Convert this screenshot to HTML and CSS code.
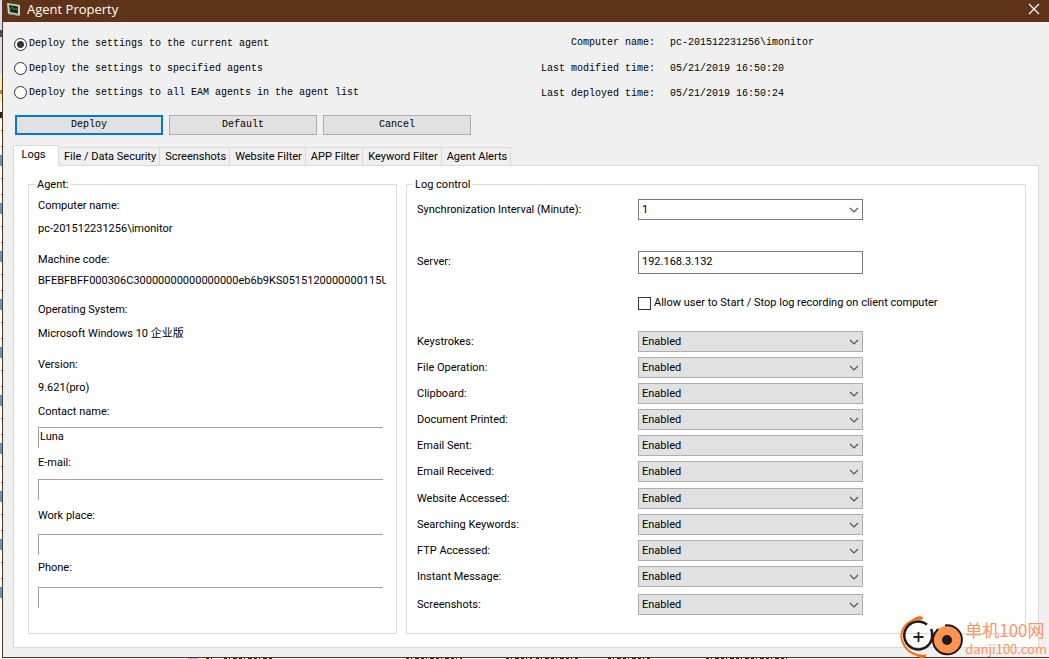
FILE: index.html
```html
<!DOCTYPE html>
<html lang="en">
<head>
<meta charset="utf-8">
<title>Agent Property</title>
<link rel="stylesheet" href="styles.css">
</head>
<body>
<svg class="defs" aria-hidden="true">
  <symbol id="chevron" viewBox="0 0 10 6"><path d="M1 1l4 4 4-4" fill="none" stroke="#555" stroke-width="1.2"/></symbol>
  <pattern id="rows" width="2" height="48" patternUnits="userSpaceOnUse">
    <rect width="2" height="9" y="11" fill="#4d9fe0"/><rect width="2" height="2" y="20" fill="#8f8b88"/>
    <rect x="1" width="1" height="1" y="34" fill="#777"/><rect x="1" width="1" height="1" y="2" fill="#777"/>
  </pattern>
</svg>
<div class="desktop">
  <svg class="edge" aria-hidden="true">
    <rect width="2" height="75" fill="#d3e0f2"/><rect y="30" width="2" height="7" fill="#46457c"/>
    <rect y="76" width="2" height="26" fill="#ffeaa0"/><rect y="90" width="2" height="4" fill="#75a56b"/>
    <rect y="112" width="2" height="6" fill="#222"/><rect y="120" width="2" height="490" fill="url(#rows)"/>
  </svg>
  <main class="window">
    <header class="titlebar">
      <svg class="app-icon" viewBox="0 0 14 14" aria-hidden="true">
        <path d="M0 1l13 2v11L1 12z" fill="#c9cfca"/><path d="M2 3l9 1.500v7L3 10z" fill="#17251b"/>
        <path d="M3 8l2-3 2 3 2-2 2 3" fill="none" stroke="#2d9b3e"/><path d="M1 12l12 2v-1L1 11z" fill="#8a8f8b"/>
      </svg>
      <h1>Agent Property</h1>
      <button class="close" type="button" aria-label="Close"><svg viewBox="0 0 12 12"><path d="M1 1l10 10M11 1L1 11" stroke="#fff" stroke-width="1.300"/></svg></button>
    </header>
    <section class="summary">
      <div class="scope">
        <label><input type="radio" name="scope" checked>Deploy the settings to the current agent</label>
        <label><input type="radio" name="scope">Deploy the settings to specified agents</label>
        <label><input type="radio" name="scope">Deploy the settings to all EAM agents in the agent list</label>
      </div>
      <dl class="info">
        <dt>Computer name:</dt><dd>pc-201512231256\imonitor</dd>
        <dt>Last modified time:</dt><dd>05/21/2019 16:50:20</dd>
        <dt>Last deployed time:</dt><dd>05/21/2019 16:50:24</dd>
      </dl>
    </section>
    <div class="actions">
      <button class="primary" type="button">Deploy</button>
      <button type="button">Default</button>
      <button type="button">Cancel</button>
    </div>
    <nav class="tabs" role="tablist">
      <button type="button" role="tab" aria-selected="true">Logs</button>
      <button type="button" role="tab">File / Data Security</button>
      <button type="button" role="tab">Screenshots</button>
      <button type="button" role="tab">Website Filter</button>
      <button type="button" role="tab">APP Filter</button>
      <button type="button" role="tab">Keyword Filter</button>
      <button type="button" role="tab">Agent Alerts</button>
    </nav>
    <section class="panel" role="tabpanel">
      <fieldset class="agent">
        <legend>Agent:</legend>
        <div class="agent-grid">
          <span>Computer name:</span><span>pc-201512231256\imonitor</span>
          <span>Machine code:</span><span class="code">BFEBFBFF000306C30000000000000000eb6b9KS0515120000000115UB</span>
          <span>Operating System:</span><span>Microsoft Windows 10 企业版</span>
          <span>Version:</span><span>9.621(pro)</span>
          <label for="contact">Contact name:</label><input id="contact" type="text" value="Luna">
          <label for="email">E-mail:</label><input id="email" type="text">
          <label for="work">Work place:</label><input id="work" type="text">
          <label for="phone">Phone:</label><input id="phone" type="text">
        </div>
      </fieldset>
      <fieldset class="log">
        <legend>Log control</legend>
        <div class="log-grid">
          <label for="interval">Synchronization Interval (Minute):</label>
          <div class="pick"><select class="open" id="interval"><option>1</option></select><svg><use href="#chevron"/></svg></div>
          <label for="server">Server:</label><input id="server" type="text" value="192.168.3.132">
          <label class="check"><input type="checkbox">Allow user to Start / Stop log recording on client computer</label>
          <label for="s1">Keystrokes:</label><div class="pick"><select id="s1"><option>Enabled</option></select><svg><use href="#chevron"/></svg></div>
          <label for="s2">File Operation:</label><div class="pick"><select id="s2"><option>Enabled</option></select><svg><use href="#chevron"/></svg></div>
          <label for="s3">Clipboard:</label><div class="pick"><select id="s3"><option>Enabled</option></select><svg><use href="#chevron"/></svg></div>
          <label for="s4">Document Printed:</label><div class="pick"><select id="s4"><option>Enabled</option></select><svg><use href="#chevron"/></svg></div>
          <label for="s5">Email Sent:</label><div class="pick"><select id="s5"><option>Enabled</option></select><svg><use href="#chevron"/></svg></div>
          <label for="s6">Email Received:</label><div class="pick"><select id="s6"><option>Enabled</option></select><svg><use href="#chevron"/></svg></div>
          <label for="s7">Website Accessed:</label><div class="pick"><select id="s7"><option>Enabled</option></select><svg><use href="#chevron"/></svg></div>
          <label for="s8">Searching Keywords:</label><div class="pick"><select id="s8"><option>Enabled</option></select><svg><use href="#chevron"/></svg></div>
          <label for="s9">FTP Accessed:</label><div class="pick"><select id="s9"><option>Enabled</option></select><svg><use href="#chevron"/></svg></div>
          <label for="s10">Instant Message:</label><div class="pick"><select id="s10"><option>Enabled</option></select><svg><use href="#chevron"/></svg></div>
          <label for="s11">Screenshots:</label><div class="pick"><select id="s11"><option>Enabled</option></select><svg><use href="#chevron"/></svg></div>
        </div>
      </fieldset>
    </section>
  </main>
  <svg class="under" aria-hidden="true">
    <path d="M188 .5h10" stroke="#9db8e6"/>
    <path d="M206 .5h8M224 .5h48M406 .5h56M506 .5h26M536 .5h42M608 .5h42M706 .5h84" stroke="#222" stroke-dasharray="3 2 1 3 4 2"/>
  </svg>
  <div class="watermark">
    <svg viewBox="0 0 64 44" aria-hidden="true">
      <path d="M21 3C5 5-2 17 3 28c4 9 12 13 23 13" fill="none" stroke="#ff7412" stroke-width="2"/>
      <path d="M11 6c4-4 8-6 12-4l-1 3c-4-1-7 0-11 1z" fill="#ff6b0a"/><path d="M15 38c4 3 8 3 12 1l-3 4c-4 1-7-1-9-5z" fill="#ff6b0a"/>
      <path d="M27 9.500A14 14 0 1 0 32 23Q33 18 31 14" fill="none" stroke="#211b1a" stroke-width="2.500"/>
      <path d="M13.500 22h10M18.500 17v10" stroke="#211b1a" stroke-width="1.800"/>
      <circle cx="47" cy="25" r="14" fill="#ff9350"/>
      <path d="M45 10.500A14.500 14.500 0 1 1 33 23Q34 18 38 14" fill="none" stroke="#211b1a" stroke-width="2"/>
      <circle cx="47" cy="25" r="5" fill="#211b1a"/>
    </svg>
    <div><strong>单机100网</strong><span>danji100.com</span></div>
  </div>
</div>
</body>
</html>
```
FILE: styles.css
```css
* { box-sizing: border-box; }
body { margin: 0; background: #fff; color: #000; font: 11px/16px Roboto, "Noto Sans CJK SC", sans-serif; }
button, input, select { font: inherit; color: inherit; margin: 0; border-radius: 0; }
.defs { position: absolute; width: 0; height: 0; }
.desktop { position: relative; display: grid; grid-template-columns: 2px 1fr; grid-template-rows: 1fr 1px; min-height: 100vh; }
.edge { width: 2px; height: 100%; }
.window { display: flex; flex-direction: column; min-width: 0; background: #f0f0f0; border: solid #5f3317; border-width: 0 0 1px 1px; }
.under { grid-column: 1 / -1; width: 100%; height: 1px; }

.titlebar { display: flex; align-items: center; gap: 6px; height: 22px; padding: 0 9px 4px 4px; background: #5f3317; color: #fff; }
.app-icon { width: 14px; height: 14px; }
h1 { flex: 1; margin: 0; font: 13px/18px "Open Sans", sans-serif; }
.close { display: flex; padding: 0; border: 0; background: none; }
.close svg { width: 12px; height: 12px; }

.summary { display: grid; grid-template-columns: 527px 1fr; padding: 9px 0 0 11px; font: 10px/16px "Liberation Mono", monospace; }
.scope { display: grid; grid-template-rows: 25px 24px 24px; }
.scope label { display: flex; align-items: center; gap: 2px; padding-top: 1px; line-height: 18px; }
.scope input { appearance: none; width: 13px; height: 13px; border: 1px solid #333; border-radius: 50%; background: #fff; }
.scope input:checked { background: radial-gradient(circle, #333 3px, #fff 4px); }
.info { display: grid; grid-template-columns: 114px 1fr; grid-template-rows: 26px 25px 22px; column-gap: 15px; margin: 4px 0 0; white-space: nowrap; }
.info dt { text-align: right; }
.info dd { margin: 0; }

.actions { display: flex; gap: 6px; padding: 7px 0 0 12px; }
.actions button { width: 148px; height: 20px; padding: 0; border: 1px solid #adadad; background: #e1e1e1; font: 10px/16px "Liberation Mono", monospace; }
.actions .primary { border: 2px solid #0078d7; }

.tabs { display: flex; align-items: flex-end; padding: 10px 0 0 10px; }
.tabs button { height: 18px; padding: 0 3px 0 5px; border: solid #d9d9d9; border-width: 1px 1px 0 0; background: #f0f0f0; white-space: nowrap; }
.tabs [aria-selected] { z-index: 1; width: 46px; height: 21px; margin-bottom: -1px; padding: 0 12px 2px 7px; border-left-width: 1px; background: #fff; }

.panel { flex: 1; display: grid; grid-template-columns: 369px 1fr; gap: 9px; margin: 0 10px 9px; padding: 10px 12px 13px 14px; border: 1px solid #d9d9d9; background: #fff; }
fieldset { min-width: 0; margin: 0; padding: 0; border: 1px solid #dcdcdc; }
legend { margin-left: 6px; padding: 0 2px; line-height: 17px; }
.agent-grid { display: grid; grid-template-rows: 23px 31px 21px 29px 24px 31px 23px 24px 23px 28px 24px 29px 26px 26px 27px 21px; align-items: start; padding: 5px 10px 0 9px; }
.code { overflow: hidden; white-space: nowrap; }
.agent input { width: calc(100% - 3px); height: 21px; padding: 0 1px 4px; border: solid #a0a0a0; border-width: 1px 0 0 1px; background: #fff; }
.log-grid { display: grid; grid-template-columns: 221px 225px 1fr; grid-template-rows: 52px 41px 39px repeat(5, 26px) 27px repeat(3, 26px) 28px 21px; align-items: start; padding: 6px 0 0 10px; }
.log-grid > label { grid-column: 1; line-height: 22px; }
.log-grid > .check { grid-column: 2 / -1; display: flex; align-items: center; gap: 3px; }
.check input { appearance: none; width: 13px; height: 13px; border: 1px solid #333; background: #fff; }
.pick { position: relative; }
.pick select, #server { display: block; width: 100%; height: 21px; padding: 0 3px; border: 1px solid #adadad; background: #e1e1e1; appearance: none; }
.pick .open, #server { border-color: #7a7a7a; background: #fff; }
#server { height: 23px; padding-bottom: 3px; }
.pick svg { position: absolute; right: 4px; top: 8px; width: 10px; height: 6px; pointer-events: none; }

.watermark { position: absolute; right: 2px; bottom: 0; display: flex; gap: 1px; color: #ff9560; }
.watermark svg { width: 64px; height: 44px; }
.watermark div { display: flex; flex-direction: column; padding-top: 4px; }
.watermark strong { font: 17px/22px "Noto Sans CJK SC", sans-serif; }
.watermark span { font: 13px/16px "Noto Sans CJK SC", sans-serif; }
```
